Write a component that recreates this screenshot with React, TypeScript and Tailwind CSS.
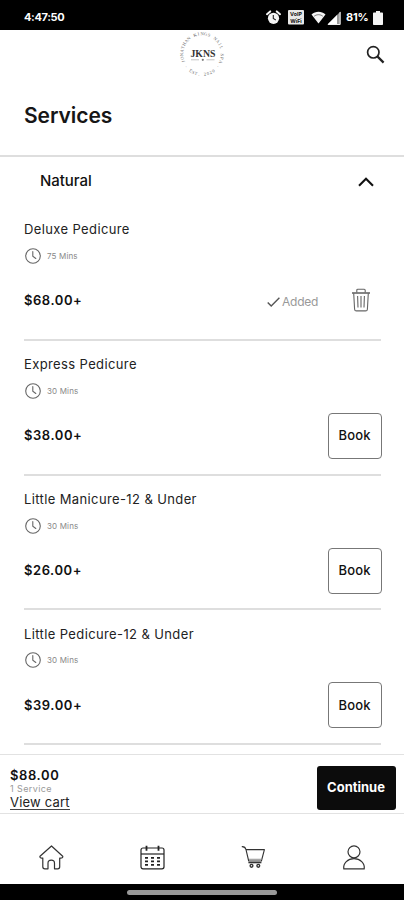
import React from 'react';

interface Service {
  name: string;
  duration: string;
  price: string;
  added?: boolean;
}

const SERVICES: Service[] = [
  { name: 'Deluxe Pedicure', duration: '75 Mins', price: '$68.00+', added: true },
  { name: 'Express Pedicure', duration: '30 Mins', price: '$38.00+' },
  { name: 'Little Manicure-12 & Under', duration: '30 Mins', price: '$26.00+' },
  { name: 'Little Pedicure-12 & Under', duration: '30 Mins', price: '$39.00+' },
];

const StatusBar: React.FC = () => (
  <div className="flex h-[30px] shrink-0 items-center justify-between bg-black pt-[5px] pr-[21px] pl-6 text-[11px] font-bold text-white">
    <span className="tracking-[-0.35px]">4:47:50</span>
    <div className="flex items-center">
      {/* Alarm */}
      <svg className="h-[15px] w-[15px]" viewBox="0 0 15 15" fill="none">
        <circle cx="7.5" cy="8.3" r="5.6" fill="#f4f4f4" />
        <path d="M1 4.2 4.2 1.4M14 4.2 10.8 1.4" stroke="#f4f4f4" strokeWidth="2" strokeLinecap="round" />
        <path d="M7.3 5v3.5l2.5 1.5" stroke="#222" strokeWidth="1.1" />
      </svg>
      {/* Wifi calling */}
      <svg className="ml-[7px] h-[15px] w-[16px]" viewBox="0 0 16 15">
        <rect width="16" height="14.5" rx="1" fill="#e8e8e8" />
        <text x="8" y="6.4" textAnchor="middle" fontSize="5.3" fontWeight="700" fill="#111">VoIP</text>
        <text x="8" y="12.9" textAnchor="middle" fontSize="5.3" fontWeight="700" fill="#111">WiFi</text>
      </svg>
      <svg className="ml-[7px] h-[13px] w-[15px]" viewBox="0 0 15 13">
        <path d="M.5 3.6C4.6-.2 10.4-.2 14.5 3.6L7.5 12.5Z" fill="#f4f4f4" />
        <path d="M3.2 5.2c2.6-2 6-2 8.6 0" fill="none" stroke="#555" strokeWidth=".8" />
      </svg>
      <svg className="ml-[1px] h-[14px] w-[14px]" viewBox="0 0 14 14">
        <path d="M13.5.5v13H.5Z" fill="#999" />
        <path d="M10 4v9.5H.5Z" fill="#fff" />
        <path d="M13.1 1v12.5H1" fill="none" stroke="#eee" />
      </svg>
      <span className="ml-[5px] w-[24px] tracking-[-0.2px]">81%</span>
      <svg className="ml-[3px] h-[14px] w-[10px]" viewBox="0 0 10 14">
        <path d="M3 0h4v1.6h2.2a.8.8 0 0 1 .8.8v10.8a.8.8 0 0 1-.8.8H.8a.8.8 0 0 1-.8-.8V2.4a.8.8 0 0 1 .8-.8H3Z" fill="#f4f4f4" />
      </svg>
    </div>
  </div>
);

const LOGO_TOP = 'JONATHAN KINGS NAIL SPA';
const LOGO_BOTTOM = '· EST. 2020 ·';

// Letters run clockwise round the top and counter-clockwise along the bottom
const Logo: React.FC = () => (
  <svg className="h-[48px] w-[52px]" viewBox="0 0 52 48">
    <g fontFamily="'Liberation Serif', serif" fill="#666" fontSize="4.5" textAnchor="middle">
      {LOGO_TOP.split('').map((char, i) =>
        char === ' ' ? null : (
          <text key={i} x="26" y="5.2" transform={`rotate(${-112 + i * 10.2} 26 24)`}>
            {char}
          </text>
        )
      )}
      {LOGO_BOTTOM.split('').map((char, i) =>
        char === ' ' ? null : (
          <text key={i} x="26" y="45.8" transform={`rotate(${51 - i * 8.5} 26 24)`}>
            {char}
          </text>
        )
      )}
    </g>
    <text
      x="14.4"
      y="27"
      fontFamily="'Liberation Serif', serif"
      fontSize="11"
      fontWeight="700"
      fill="#333"
      textLength="25"
      lengthAdjust="spacingAndGlyphs"
    >
      JKNS
    </text>
    <path d="M15 29.8h8M30.5 29.8h8" stroke="#aaa" strokeWidth=".7" />
    <circle cx="26.8" cy="29.8" r="1.1" fill="#777" />
  </svg>
);

const ClockIcon: React.FC = () => (
  <svg className="h-[16px] w-[16px]" viewBox="0 0 16 16" fill="none" stroke="#666" strokeWidth="1.1">
    <circle cx="8" cy="8" r="7.3" />
    <path d="M7.8 3.5v4.8l3 2.2" strokeLinecap="round" />
  </svg>
);

const TrashIcon: React.FC = () => (
  <svg className="h-[24px] w-[20px]" viewBox="0 0 20 24" fill="none" stroke="#666" strokeWidth="1.1">
    <path d="M1 5h18" strokeWidth="1.6" />
    <path d="M5.8 4.6V2.2a1 1 0 0 1 1-1h6.4a1 1 0 0 1 1 1v2.4" />
    <path d="M2.7 5.2 3.6 21.2a1.8 1.8 0 0 0 1.8 1.7h9.2a1.8 1.8 0 0 0 1.8-1.7L17.3 5.2" />
    <path d="M6.6 8l.4 11.5M10 8v11.5M13.4 8 13 19.5" />
  </svg>
);

const ServiceRow: React.FC<{ service: Service }> = ({ service }) => (
  <li className="flex h-[134.8px] flex-col border-b-2 border-[#dedede] pt-[14.4px]">
    <h3 className="text-[13px] leading-[18px] tracking-[0.38px] text-[#222]">{service.name}</h3>
    <div className="mt-[8.6px] flex h-[18px] items-center gap-[6px] pl-px">
      <ClockIcon />
      <span className="text-[8px] tracking-[0.15px] text-[#888]">{service.duration}</span>
    </div>
    <div className="mt-[13px] flex h-[46px] items-center justify-between">
      <span className="text-[13px] font-semibold tracking-[0.55px] text-[#111]">{service.price}</span>
      {service.added ? (
        <div className="flex items-center pr-[10px]">
          <svg className="mt-[3px] h-[10px] w-[13px]" viewBox="0 0 13 10" fill="none" stroke="#555" strokeWidth="1.4">
            <path d="m.7 5.4 3.5 3.5L12.4.8" />
          </svg>
          <span className="mt-[2px] ml-[2px] w-[69px] text-[12px] tracking-[-0.25px] text-[#999]">Added</span>
          <button type="button" aria-label="Remove" className="-mt-[2px]">
            <TrashIcon />
          </button>
        </div>
      ) : (
        <button
          type="button"
          className="-mr-px h-[46px] w-[54px] rounded-[4px] border border-[#777] pr-px text-[13px] font-medium tracking-[0.15px] text-[#111]"
        >
          Book
        </button>
      )}
    </div>
  </li>
);

const BottomNav: React.FC = () => (
  <nav className="flex h-[70px] shrink-0 items-center justify-around bg-white pt-[17px] pl-px">
    <svg className="h-[25px] w-[25px]" viewBox="0 0 25 25" fill="none" stroke="#333" strokeWidth="1.2" strokeLinejoin="round">
      <path d="M12.5 1 1 11.2c-.5 1.5.8 2.3 2.8 1.8v8.8a2 2 0 0 0 2 2H9v-5.6c0-4 6.5-4 6.5 0v5.6h3.2a2 2 0 0 0 2-2V13c2.2.4 3.5-.5 3-1.8Z" />
    </svg>
    <svg className="h-[25px] w-[25px]" viewBox="0 0 25 25" fill="none" stroke="#222" strokeWidth="1.2">
      <rect x="1" y="3" width="23" height="20.8" rx="2" />
      <path d="M1 9h23" />
      <path d="M6.5.8v5M18.5.8v5" strokeWidth="1.8" />
      <path d="M5 12.8h3M11 12.8h3M17 12.8h3M5 16.3h3M11 16.3h3M17 16.3h3M5 19.8h3M11 19.8h3M17 19.8h3" strokeWidth="1.7" />
    </svg>
    <svg className="h-[25px] w-[25px]" viewBox="0 0 25 25" fill="none" stroke="#333" strokeWidth="1.1" strokeLinejoin="round">
      <path d="M1.8 1.6c2.4-.2 3.6.6 4.2 3h18.4L21.4 16H8.7L6 4.6" />
      <path d="M8.4 17.6h13" strokeWidth="1.4" />
      <path d="M9 14.3h12.5" stroke="#999" />
      <circle cx="11.5" cy="20.8" r="1.4" strokeWidth="1.4" />
      <circle cx="18.3" cy="20.8" r="1.4" strokeWidth="1.4" />
    </svg>
    <svg className="h-[25px] w-[25px]" viewBox="0 0 25 25" fill="none" stroke="#333" strokeWidth="1.2" strokeLinejoin="round">
      <circle cx="13" cy="6.8" r="6" />
      <path d="M2.8 23.8c-.8-5.5 4-10.2 10.2-10.2s11 4.7 10.2 10.2Z" />
    </svg>
  </nav>
);

const App: React.FC = () => {
  return (
    <div className="flex h-[900px] w-[404px] flex-col overflow-hidden bg-white font-['Inter',sans-serif]">
      <StatusBar />

      <header className="grid h-[48px] shrink-0 grid-cols-[1fr_52px_1fr] items-center">
        <span />
        <Logo />
        <button type="button" aria-label="Search" className="mr-[19px] justify-self-end">
          <svg className="h-[19px] w-[19px]" viewBox="0 0 19 19" fill="none" stroke="#222">
            <circle cx="7.3" cy="7.3" r="5.7" strokeWidth="1.7" />
            <path d="m11.6 11.6 6 6" strokeWidth="2.2" />
          </svg>
        </button>
      </header>

      <div className="flex h-[79px] shrink-0 items-center border-b-2 border-[#dedede] px-6 pb-[2px]">
        <h1 className="text-[21px] font-semibold tracking-[-0.05px] text-[#161616]">Services</h1>
      </div>

      <main className="min-h-0 flex-1 overflow-hidden">
        <div className="flex h-[49px] items-center justify-between pr-[30px] pl-10">
          <h2 className="text-[15px] font-medium tracking-[-0.05px] text-[#111]">Natural</h2>
          <svg className="h-[10px] w-[16px]" viewBox="0 0 16 10" fill="none" stroke="#111" strokeWidth="2.1">
            <path d="m1 8.7 7-7 7 7" />
          </svg>
        </div>
        <ul className="pr-[23px] pl-6">
          {SERVICES.map((service) => (
            <ServiceRow key={service.name} service={service} />
          ))}
        </ul>
      </main>

      {/* Cart summary */}
      <div className="flex h-[60px] shrink-0 items-end justify-between border-t border-b border-[#e2e2e2] bg-white pr-2 pb-[3px] pl-[10px]">
        <div className="flex flex-col items-start">
          <span className="text-[13px] leading-[15px] font-semibold tracking-[0.6px] text-[#111]">$88.00</span>
          <span className="text-[9px] leading-[12px] tracking-[0.4px] text-[#999]">1 Service</span>
          <a href="#" className="border-b border-[#444] text-[13px] leading-[14px] tracking-[0.2px] text-[#222]">
            View cart
          </a>
        </div>
        <button type="button" className="h-[44px] w-[79px] rounded-[3px] bg-[#0c0c0c] pr-px text-[13px] font-bold text-white">
          Continue
        </button>
      </div>

      <BottomNav />

      <div className="flex h-[16px] shrink-0 items-center justify-center bg-black">
        <div className="h-[5px] w-[150px] rounded-full bg-[#999]" />
      </div>
    </div>
  );
};

export default App;
